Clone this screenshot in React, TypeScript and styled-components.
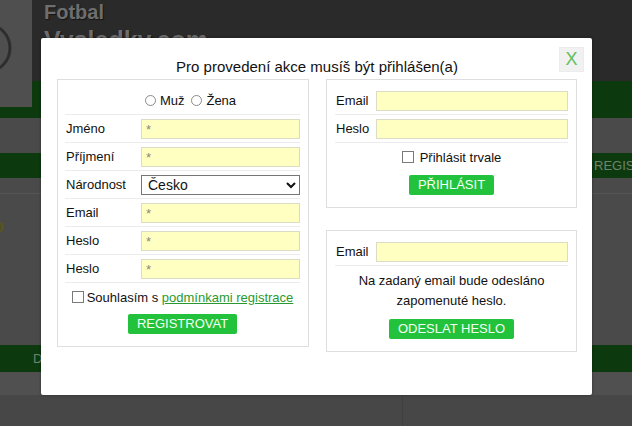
import React from "react";
import styled, { createGlobalStyle } from "styled-components";

const GlobalStyle = createGlobalStyle`
  html, body { margin: 0; padding: 0; }
  body { font-family: "Liberation Sans", Arial, sans-serif; background: #4a4a4a; }
  * { box-sizing: border-box; }
`;

const Page = styled.div`
  position: relative;
  width: 632px;
  height: 426px;
  overflow: hidden;
  background: #4a4a4a;
  display: flex;
  flex-direction: column;
`;

const Header = styled.header`
  position: relative;
  height: 81px;
  background: #2a2a2a;
  padding: 0 0 0 44px;
  flex-shrink: 0;
`;

const Logo = styled.div`
  position: absolute;
  left: 0;
  top: 0;
  width: 32px;
  height: 107px;
  background: #4f4f4f;
  z-index: 1;
`;

const SiteName = styled.div<{ $size: number }>`
  font-weight: bold;
  font-size: ${(p) => p.$size}px;
  line-height: ${(p) => p.$size + 5}px;
  color: #6e6e6e;
  text-shadow: 1px 1px 1px #151515;
`;

const Band = styled.div<{ $h: number; $pad: number }>`
  height: ${(p) => p.$h}px;
  flex-shrink: 0;
  background: #0c3a0e;
  padding-left: ${(p) => p.$pad}px;
  display: flex;
  align-items: center;
  white-space: nowrap;
  font-size: 13px;
  color: #6f836f;
`;

const Gap = styled.div<{ $h: number; $bg?: string }>`
  height: ${(p) => p.$h}px;
  flex-shrink: 0;
  background: ${(p) => p.$bg ?? "#4a4a4a"};
`;

const Content = styled.div`
  height: 167px;
  flex-shrink: 0;
  border-top: 15px solid #4a4a4a;
  padding-top: 22px;
  box-shadow: inset 0 1px 0 #555;
`;

const Slogan = styled.div`
  font-size: 20px;
  font-weight: bold;
  font-style: italic;
  color: #565420;
  margin-left: -8px;
`;

const Footer = styled.div`
  flex: 1;
  display: grid;
  grid-template-columns: 403px 1fr;
  background: #474747;
`;

const FooterCol = styled.div`
  border-right: 1px solid #404040;
`;

const Modal = styled.div`
  position: absolute;
  left: 41px;
  top: 38px;
  width: 551px;
  height: 357px;
  background: #fff;
  border-radius: 2px;
  box-shadow: 0 0 3px rgba(0, 0, 0, 0.4);
  padding: 19px 15px 0 16px;
  z-index: 5;
`;

const CloseButton = styled.button`
  position: absolute;
  top: 9px;
  right: 8px;
  width: 25px;
  height: 25px;
  border: 1px solid #ececec;
  background: #f1f1f1;
  color: #5fc060;
  font-family: "Liberation Sans", Arial, sans-serif;
  font-size: 18px;
  line-height: 23px;
  padding: 0;
  text-align: center;
  cursor: pointer;
`;

const Title = styled.h2`
  margin: 0 0 3px;
  font-weight: normal;
  font-size: 15px;
  line-height: 19px;
  color: #111;
  text-align: center;
`;

const Columns = styled.div`
  display: grid;
  grid-template-columns: 252px 251px;
  column-gap: 17px;
  align-items: start;
`;

const Stack = styled.div`
  display: flex;
  flex-direction: column;
  gap: 22px;
`;

const Panel = styled.div<{ $padL: number }>`
  border: 1px solid #dedede;
  padding: 7px 8px 12px ${(p) => p.$padL}px;
  font-size: 13px;
  color: #111;
`;

const RadioRow = styled.div`
  height: 28px;
  border-bottom: 1px solid #ececec;
  display: flex;
  align-items: center;
  justify-content: center;
  padding-left: 20px;
  gap: 3px;
`;

const RadioLabel = styled.label`
  display: inline-flex;
  align-items: center;
  gap: 4px;
  margin-right: 4px;
`;

const Radio = styled.input`
  appearance: none;
  width: 11px;
  height: 11px;
  margin: 0;
  border: 1px solid #8a8a8a;
  border-radius: 50%;
  background: #fff;
`;

const FieldRow = styled.div`
  height: 28px;
  border-bottom: 1px solid #ececec;
  display: flex;
  align-items: flex-start;
  padding-top: 4px;
`;

const Label = styled.label<{ $w: number }>`
  width: ${(p) => p.$w}px;
  flex-shrink: 0;
  padding-left: 1px;
  line-height: 20px;
`;

const TextInput = styled.input`
  flex: 1;
  min-width: 0;
  height: 20px;
  margin: 0;
  border: 1px solid #dcdcc4;
  background: #ffffc2;
  padding: 0 4px;
  font-family: "Liberation Sans", Arial, sans-serif;
  font-size: 13px;
  outline: none;
  &::placeholder { color: #8a8a7a; }
`;

const Select = styled.select`
  flex: 1;
  min-width: 0;
  height: 20px;
  margin: 0;
  border: 1px solid #767676;
  border-radius: 0;
  background: #fff;
  padding: 0 2px;
  font-family: "Liberation Sans", Arial, sans-serif;
  font-size: 14px;
  color: #111;
`;

const CheckRow = styled.label<{ $gap: number }>`
  height: 28px;
  display: flex;
  align-items: center;
  justify-content: center;
  gap: ${(p) => p.$gap}px;
`;

const Checkbox = styled.input`
  appearance: none;
  width: 12px;
  height: 12px;
  margin: 0;
  border: 1px solid #7a7a7a;
  background: #fff;
`;

const TermsLink = styled.a`
  color: #2a9a30;
  text-decoration: underline;
`;

const Info = styled.p`
  margin: 5px 0 0;
  text-align: center;
  line-height: 20px;
`;

const ButtonRow = styled.div<{ $mt: number }>`
  display: flex;
  justify-content: center;
  margin-top: ${(p) => p.$mt}px;
`;

const GreenButton = styled.button`
  height: 20px;
  padding: 0 9px;
  border: none;
  border-radius: 2px;
  background: #22c23c;
  color: #f4fff4;
  font-family: "Liberation Sans", Arial, sans-serif;
  font-size: 13px;
  line-height: 20px;
  text-transform: uppercase;
  cursor: pointer;
`;

export default function App() {
  return (
    <>
      <GlobalStyle />
      <Page>
        <Header>
          <Logo>
            <svg width="32" height="107" viewBox="0 0 32 107">
              <circle cx="-14" cy="48" r="24" fill="none" stroke="#2e2e2e" strokeWidth="3" />
            </svg>
          </Logo>
          <SiteName $size={20}>Fotbal</SiteName>
          <SiteName $size={25}>Vysledky.com</SiteName>
        </Header>
        <Band $h={37} $pad={0} />
        <Gap $h={35} />
        <Band $h={25} $pad={594}>REGISTRACE</Band>
        <Content>
          <Slogan>o</Slogan>
        </Content>
        <Band $h={27} $pad={33}>D</Band>
        <Gap $h={23} $bg="#505050" />
        <Footer>
          <FooterCol />
          <div />
        </Footer>

        <Modal>
          <CloseButton>X</CloseButton>
          <Title>Pro provedení akce musíš být přihlášen(a)</Title>
          <Columns>
            <Panel $padL={7}>
              <RadioRow>
                <RadioLabel>
                  <Radio type="radio" name="sex" /> Muž
                </RadioLabel>
                <RadioLabel>
                  <Radio type="radio" name="sex" /> Žena
                </RadioLabel>
              </RadioRow>
              <FieldRow>
                <Label $w={76}>Jméno</Label>
                <TextInput placeholder="*" />
              </FieldRow>
              <FieldRow>
                <Label $w={76}>Příjmení</Label>
                <TextInput placeholder="*" />
              </FieldRow>
              <FieldRow>
                <Label $w={76}>Národnost</Label>
                <Select defaultValue="cz">
                  <option value="cz">Česko</option>
                  <option value="sk">Slovensko</option>
                </Select>
              </FieldRow>
              <FieldRow>
                <Label $w={76}>Email</Label>
                <TextInput placeholder="*" />
              </FieldRow>
              <FieldRow>
                <Label $w={76}>Heslo</Label>
                <TextInput type="password" placeholder="*" />
              </FieldRow>
              <FieldRow>
                <Label $w={76}>Heslo</Label>
                <TextInput type="password" placeholder="*" />
              </FieldRow>
              <CheckRow $gap={3}>
                <Checkbox type="checkbox" />
                <span>
                  Souhlasím s <TermsLink href="#">podmínkami registrace</TermsLink>
                </span>
              </CheckRow>
              <ButtonRow $mt={3}>
                <GreenButton>Registrovat</GreenButton>
              </ButtonRow>
            </Panel>
            <Stack>
              <Panel $padL={8}>
                <FieldRow>
                  <Label $w={41}>Email</Label>
                  <TextInput />
                </FieldRow>
                <FieldRow>
                  <Label $w={41}>Heslo</Label>
                  <TextInput type="password" />
                </FieldRow>
                <CheckRow $gap={6}>
                  <Checkbox type="checkbox" />
                  <span>Přihlásit trvale</span>
                </CheckRow>
                <ButtonRow $mt={4}>
                  <GreenButton>Přihlásit</GreenButton>
                </ButtonRow>
              </Panel>
              <Panel $padL={8}>
                <FieldRow>
                  <Label $w={41}>Email</Label>
                  <TextInput />
                </FieldRow>
                <Info>
                  Na zadaný email bude odesláno
                  <br />
                  zapomenuté heslo.
                </Info>
                <ButtonRow $mt={8}>
                  <GreenButton>Odeslat heslo</GreenButton>
                </ButtonRow>
              </Panel>
            </Stack>
          </Columns>
        </Modal>
      </Page>
    </>
  );
}
